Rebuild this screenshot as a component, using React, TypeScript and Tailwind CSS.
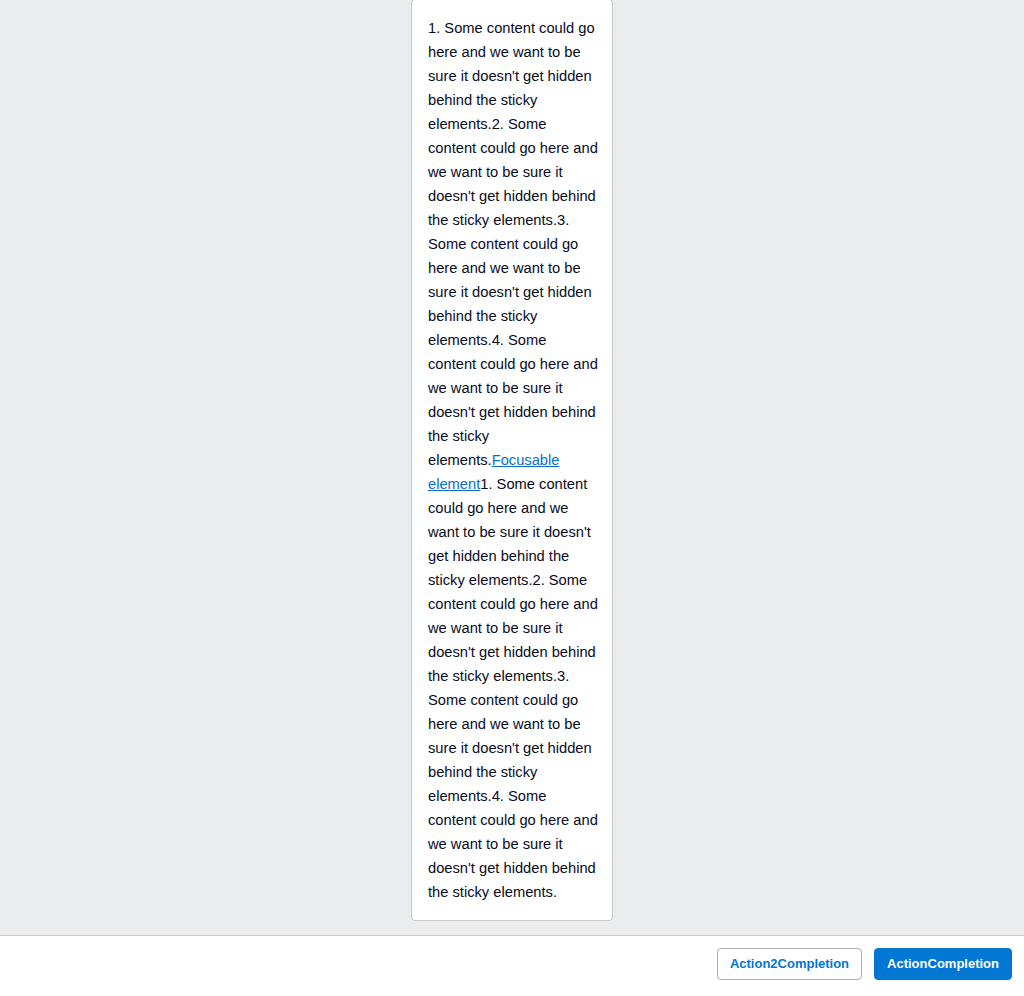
const CHUNK =
  "Some content could go here and we want to be sure it doesn't get hidden behind the sticky elements.";

function Paragraphs() {
  return (
    <>
      {[1, 2, 3, 4].map((n) => (
        <span key={n}>
          {n}. {CHUNK}
        </span>
      ))}
    </>
  );
}

export default function App() {
  return (
    <div className="flex h-screen flex-col overflow-hidden bg-[#ebecee] font-['Liberation_Sans',Arial,sans-serif]">
      <main className="flex flex-1 justify-center overflow-hidden">
        <div className="mt-[-1px] w-[202px] self-start rounded-[4px] border border-[#c9c9c9] bg-white py-4 pl-4 pr-[14px] text-[14.7px] leading-6 text-[#080b1c]">
          <Paragraphs />
          <a href="#" className="text-[#0b6fc6] underline">
            Focusable element
          </a>
          <Paragraphs />
        </div>
      </main>
      <footer className="flex h-[61px] shrink-0 items-start justify-end gap-3 border-t border-[#c9c9c9] bg-white px-3 pt-3">
        <button
          type="button"
          className="h-8 rounded-[4px] border border-[#aeaeae] bg-white px-3 text-[13px] font-bold text-[#0176d3]"
        >
          Action2Completion
        </button>
        <button
          type="button"
          className="h-8 rounded-[4px] border border-[#0176d3] bg-[#0176d3] px-3 text-[13px] font-bold text-white"
        >
          ActionCompletion
        </button>
      </footer>
    </div>
  );
}
